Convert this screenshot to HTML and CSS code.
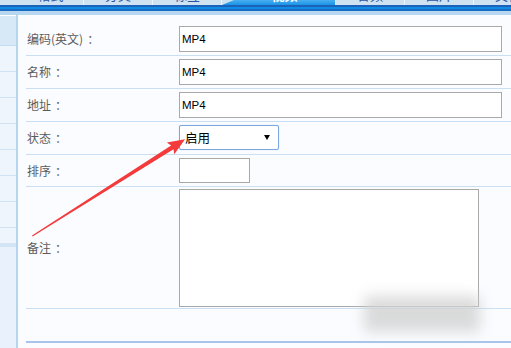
FILE: index.html
```html
<!DOCTYPE html>
<html lang="zh-CN">
<head>
<meta charset="utf-8">
<title>视频格式</title>
<link rel="stylesheet" href="styles.css">
</head>
<body>
<div class="page">
  <div class="tabs">
    <div class="tab tab-first"><span>格式</span></div>
    <div class="tab"><span>分类</span></div>
    <div class="tab"><span>标签</span></div>
    <div class="tab tab-active"><span>视频</span></div>
    <div class="tab"><span>音频</span></div>
    <div class="tab"><span>图片</span></div>
    <div class="tab"><span>文档</span></div>
  </div>
  <div class="stripe"></div>
  <div class="body">
    <aside class="side">
      <div class="side-head"></div>
      <div class="side-row"></div>
      <div class="side-row"></div>
      <div class="side-row"></div>
      <div class="side-row"></div>
      <div class="side-row"></div>
      <div class="side-row"></div>
      <div class="side-row"></div>
      <div class="side-gap"></div>
      <div class="side-band"></div>
    </aside>
    <main class="main">
      <div class="form">
        <div class="row">
          <div class="label">编码(英文)<span class="colon">：</span></div>
          <div class="field"><input class="input input-wide" type="text" value="MP4"></div>
        </div>
        <div class="row">
          <div class="label">名称<span class="colon">：</span></div>
          <div class="field"><input class="input input-wide" type="text" value="MP4"></div>
        </div>
        <div class="row">
          <div class="label">地址<span class="colon">：</span></div>
          <div class="field"><input class="input input-wide" type="text" value="MP4"></div>
        </div>
        <div class="row row-select">
          <div class="label">状态<span class="colon">：</span></div>
          <div class="field"><div class="select"><span class="select-text">启用</span><span class="caret"></span></div></div>
        </div>
        <div class="row">
          <div class="label">排序<span class="colon">：</span></div>
          <div class="field"><input class="input input-short" type="text" value=""></div>
        </div>
        <div class="row row-area">
          <div class="label">备注<span class="colon">：</span></div>
          <div class="field"><textarea class="area"></textarea></div>
        </div>
        <div class="row row-last"></div>
      </div>
    </main>
  </div>
  <svg class="arrow" width="511" height="348" viewBox="0 0 511 348">
    <polygon points="185,139.3 174.3,154.3 173.5,149.2 32.6,236.6 32,235.4 171.1,145.4 166.9,142.5" fill="#f43b3b"/>
  </svg>
  <div class="smudge"></div>
</div>
</body>
</html>
```
FILE: styles.css
```css
* { box-sizing: border-box; }
html, body { margin: 0; padding: 0; }
body {
  width: 511px;
  height: 348px;
  overflow: hidden;
  background: #f2f6fc;
  font-family: "Noto Sans CJK SC", "Noto Sans", sans-serif;
}
.page {
  position: relative;
  width: 511px;
  height: 348px;
  overflow: hidden;
}

/* tabs */
.tabs {
  display: flex;
  height: 5px;
  background: #cfe2f2;
  overflow: hidden;
}
.tab {
  flex: 0 0 69px;
  width: 69px;
  height: 5px;
  border-right: 1px solid #eef5fb;
  overflow: hidden;
  display: flex;
  justify-content: center;
  align-items: flex-start;
  color: #2b56a6;
  font-size: 13px;
}
.tab span {
  display: block;
  line-height: 13px;
  margin-top: -12px;
  white-space: nowrap;
}
.tab-first {
  flex-basis: 84px;
  padding-left: 18px;
}
.tab-active {
  flex-basis: 114px;
  padding-left: 12px;
  color: #ffffff;
  font-weight: bold;
  background: linear-gradient(#49aef0, #1994e6);
  clip-path: polygon(0 100%, 12px 0, 100% 0, 100% 100%);
  border-right: 1px solid #d8e8f5;
}

.stripe {
  height: 10px;
  background: linear-gradient(#1d62b8 0, #1d62b8 2px, #0e8de6 2px, #0e8de6 4px, #1b6bc3 4px, #1b6bc3 6px, #b7d7f0 6px, #b7d7f0 10px);
}

/* body */
.body {
  display: flex;
  height: 333px;
}
.side {
  flex: 0 0 18px;
  border-right: 2px solid #b5d5ef;
  background: #e9f2fc;
  display: flex;
  flex-direction: column;
}
.side-head {
  height: 31px;
  border-top: 1px solid #ffffff;
  background: #d7e8f6;
  border-bottom: 1px solid #c4ddf2;
}
.side-row {
  height: 26px;
  background: #eef5fd;
  border-bottom: 1px solid #cfe3f5;
}
.side-gap {
  height: 15px;
  background: #eef5fd;
}
.side-band {
  height: 4px;
  background: #d3e5f5;
}

.main {
  flex: 1;
  background: #fafcff;
  padding: 8px 0 0 8px;
}
.form {
  display: flex;
  flex-direction: column;
}
.row {
  display: flex;
  align-items: center;
  padding: 3px 0;
  border-bottom: 1px solid #c9e0f4;
}
.row-select { padding: 3px 0 4px; }
.row-area { padding: 2px 0 1px; }
.row-last {
  height: 34px;
  border-bottom: 2px solid #a9c4ea;
}
.label {
  flex: 0 0 153px;
  padding-left: 1px;
  font-size: 12px;
  color: #5b5b5b;
  line-height: 16px;
}
.colon {
  margin-left: 4px;
}
.field {
  display: flex;
  align-items: center;
}
.input {
  height: 26px;
  border: 1px solid #a9a9a9;
  background: #ffffff;
  padding: 0 2px;
  margin: 0;
  font-family: "Liberation Sans", Arial, sans-serif;
  font-size: 11.5px;
  color: #000000;
  outline: none;
}
.input-wide { width: 323px; }
.input-short { width: 71px; height: 25px; }
.select {
  width: 100px;
  height: 25px;
  border: 1px solid #7ca6e0;
  border-radius: 2px;
  box-shadow: 0 0 1px #a9c8f0;
  background: #ffffff;
  display: flex;
  align-items: center;
  padding: 0 8px 0 5px;
  font-size: 12.5px;
  color: #000000;
}
.select-text { line-height: 16px; }
.caret {
  margin-left: auto;
  width: 0;
  height: 0;
  border-left: 3px solid transparent;
  border-right: 3px solid transparent;
  border-top: 5px solid #000000;
}
.area {
  display: block;
  width: 300px;
  height: 118px;
  border: 1px solid #a9a9a9;
  background: #ffffff;
  margin: 0;
  resize: none;
  outline: none;
}

/* overlays */
.arrow {
  position: absolute;
  left: 0;
  top: 0;
  pointer-events: none;
}
.smudge {
  position: absolute;
  left: 364px;
  top: 296px;
  width: 116px;
  height: 36px;
  background: #d2d2d2;
  filter: blur(7px);
  opacity: 0.8;
  pointer-events: none;
}
```
